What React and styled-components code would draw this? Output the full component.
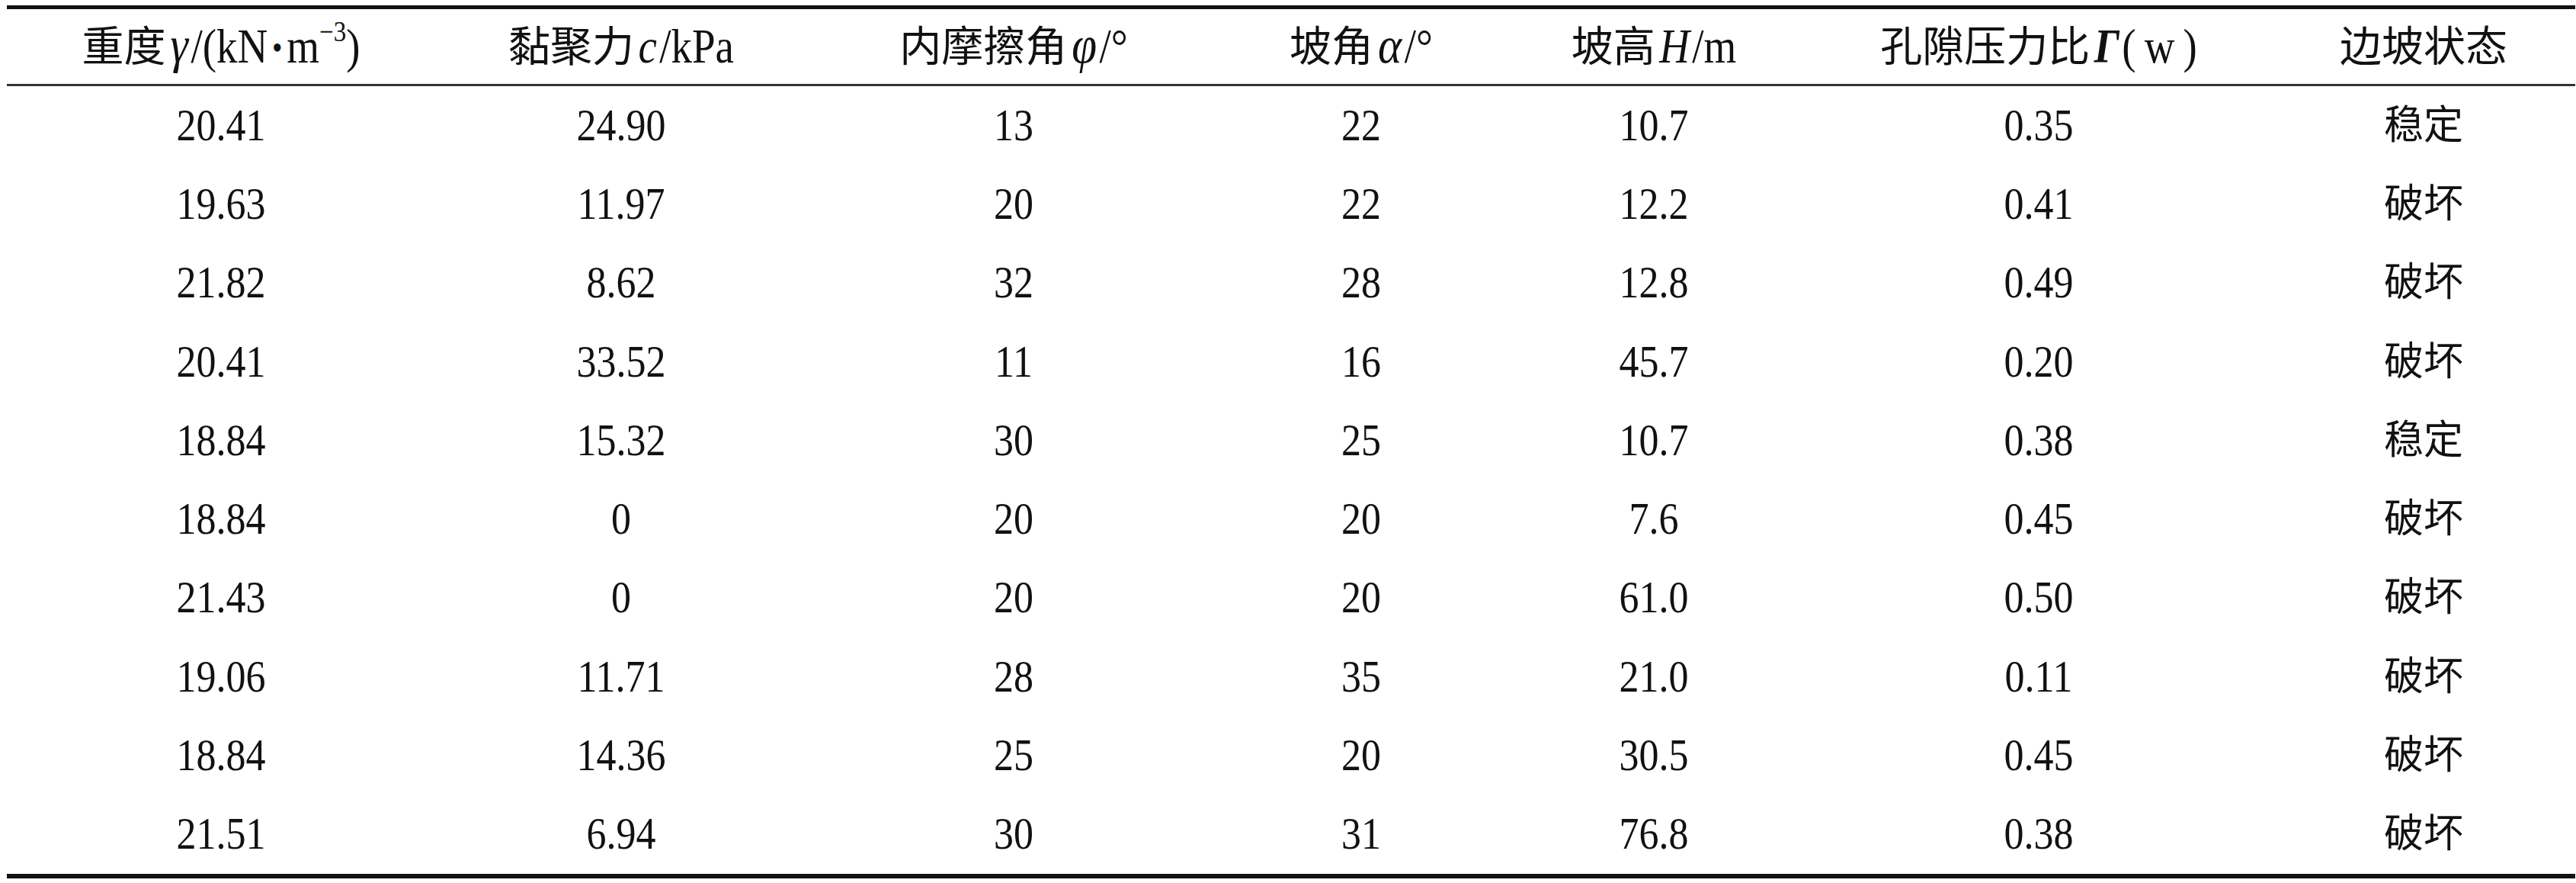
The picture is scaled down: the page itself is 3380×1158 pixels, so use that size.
import React from "react";
import styled, { createGlobalStyle } from "styled-components";

const Global = createGlobalStyle`
  html, body { margin: 0; padding: 0; background: #ffffff; }
  body {
    font-family: "Liberation Serif", "Noto Sans CJK SC", serif;
    color: #111111;
  }
`;

const Page = styled.div`
  padding: 7px 0 0 9px;
`;

const Table = styled.table`
  width: 3370px;
  table-layout: fixed;
  border-collapse: separate;
  border-spacing: 0;
  border-top: 5px solid #111111;
  border-bottom: 6px solid #111111;
  font-family: "Liberation Serif", "Noto Sans CJK SC", serif;
  font-size: 52px;
  color: #111111;
`;

const HeadCell = styled.th`
  height: 98px;
  padding: 0;
  font-size: 55px;
  font-weight: normal;
  text-align: center;
  vertical-align: middle;
  white-space: nowrap;
  line-height: 1;
  border-bottom: 3px solid #333333;
`;

const Cell = styled.td`
  height: 103.3px;
  padding: 0;
  text-align: center;
  vertical-align: middle;
  white-space: nowrap;
  line-height: 1;
`;

const Latin = styled.span`
  display: inline-block;
  font-family: "Liberation Serif", serif;
  transform: scaleY(1.14);
  transform-origin: 50% 60%;
`;

const Var = styled.i`
  font-style: italic;
  font-size: ${(p) => (p.$big ? "1.08em" : "1em")};
  font-weight: ${(p) => (p.$bold ? "bold" : "normal")};
  margin: 0 0.06em 0 0.1em;
`;

const Sup = styled.sup`
  font-size: 0.6em;
  line-height: 0;
  vertical-align: 0.75em;
`;

const Dot = styled.span`
  font-size: 0.7em;
  margin: 0 0.15em;
  vertical-align: 0.1em;
`;

const widths = [562, 488, 542, 370, 398, 612, 398];

const rows = [
  ["20.41", "24.90", "13", "22", "10.7", "0.35", "稳定"],
  ["19.63", "11.97", "20", "22", "12.2", "0.41", "破坏"],
  ["21.82", "8.62", "32", "28", "12.8", "0.49", "破坏"],
  ["20.41", "33.52", "11", "16", "45.7", "0.20", "破坏"],
  ["18.84", "15.32", "30", "25", "10.7", "0.38", "稳定"],
  ["18.84", "0", "20", "20", "7.6", "0.45", "破坏"],
  ["21.43", "0", "20", "20", "61.0", "0.50", "破坏"],
  ["19.06", "11.71", "28", "35", "21.0", "0.11", "破坏"],
  ["18.84", "14.36", "25", "20", "30.5", "0.45", "破坏"],
  ["21.51", "6.94", "30", "31", "76.8", "0.38", "破坏"],
];

export default function App() {
  return (
    <>
      <Global />
      <Page>
        <Table>
          <colgroup>
            {widths.map((w, i) => (
              <col key={i} style={{ width: w + "px" }} />
            ))}
          </colgroup>
          <thead>
            <tr>
              <HeadCell>
                重度
                <Latin>
                  <Var $big>γ</Var>/(kN<Dot>•</Dot>m<Sup>−3</Sup>)
                </Latin>
              </HeadCell>
              <HeadCell>
                黏聚力
                <Latin>
                  <Var>c</Var>/kPa
                </Latin>
              </HeadCell>
              <HeadCell>
                内摩擦角
                <Latin>
                  <Var $big>φ</Var>/°
                </Latin>
              </HeadCell>
              <HeadCell>
                坡角
                <Latin>
                  <Var $big>α</Var>/°
                </Latin>
              </HeadCell>
              <HeadCell>
                坡高
                <Latin>
                  <Var>H</Var>/m
                </Latin>
              </HeadCell>
              <HeadCell>
                孔隙压力比
                <Latin>
                  <Var $bold>Γ</Var>(&thinsp;w&thinsp;)
                </Latin>
              </HeadCell>
              <HeadCell>边坡状态</HeadCell>
            </tr>
          </thead>
          <tbody>
            {rows.map((r, i) => (
              <tr key={i}>
                {r.map((v, j) => (
                  <Cell key={j}>{j === 6 ? v : <Latin>{v}</Latin>}</Cell>
                ))}
              </tr>
            ))}
          </tbody>
        </Table>
      </Page>
    </>
  );
}
